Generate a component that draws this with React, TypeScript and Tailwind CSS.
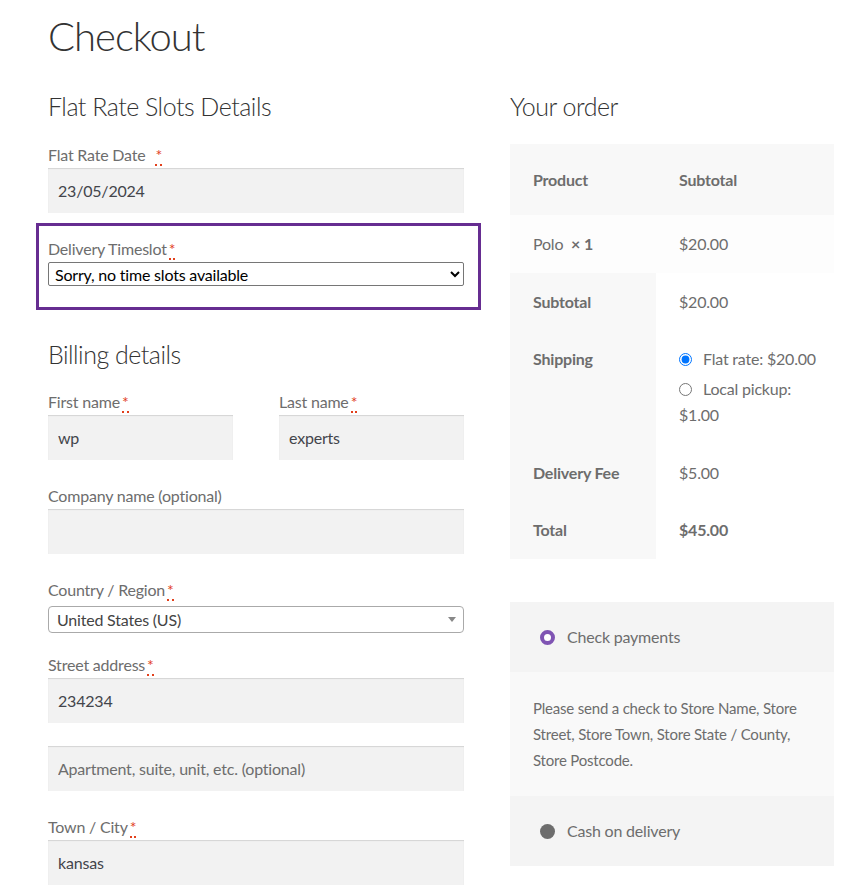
import React from 'react';

const font = { fontFamily: 'Lato, "Open Sans", sans-serif' };

function Req({ gap = false }: { gap?: boolean }) {
    return (
        <abbr
            title="required"
            className={`${gap ? 'ml-[6px]' : 'ml-[2px]'} text-[#e2401c] no-underline border-b-2 border-dotted border-[#e2401c] leading-none`}
        >
            *
        </abbr>
    );
}

function Label({ children }: { children: React.ReactNode }) {
    return <label className="block text-[16px] leading-[26px] text-[#6d6d6d]">{children}</label>;
}

function TextInput({ value, placeholder }: { value?: string; placeholder?: string }) {
    return (
        <input
            defaultValue={value}
            placeholder={placeholder}
            className="block w-full h-[45px] px-[10px] bg-[#f2f2f2] text-[16px] tracking-[-0.2px] text-[#43454b] placeholder:text-[#6d6d6d] shadow-[inset_0_1px_1px_rgba(0,0,0,0.125)] outline-none"
        />
    );
}

function Field({ label, children, last }: { label?: React.ReactNode; children: React.ReactNode; last?: boolean }) {
    return (
        <div className={last ? '' : 'mb-[23px]'}>
            {label && <Label>{label}</Label>}
            {children}
        </div>
    );
}

export default function App() {
    return (
        <div className="min-h-[893px] bg-white px-[48px] overflow-hidden tracking-[-0.2px]" style={font}>
            <h1 className="mt-[11px] text-[40px] leading-[51px] font-light tracking-[-1px] text-[#333333]">Checkout</h1>

            <div className="mt-[27px] flex gap-[46px]">
                {/* Left column: slots + billing */}
                <div className="w-[416px] shrink-0">
                    <h3 className="text-[25px] leading-[34px] font-light tracking-[-0.5px] text-[#333333]">Flat Rate Slots Details</h3>

                    <div className="mt-[19px]">
                        <Label>
                            Flat Rate Date <Req gap />
                        </Label>
                        <TextInput value="23/05/2024" />
                    </div>

                    <div className="mt-[10px] -ml-[12px] w-[445px] border-[3px] border-[#662d91] pl-[9px] pr-[14px] pt-[10px] pb-[21px]">
                        <Label>
                            Delivery Timeslot<Req />
                        </Label>
                        <select className="block w-full h-[24px] pl-[2px] bg-white text-black text-[16px] border border-[#767676] rounded-[2px]">
                            <option>Sorry, no time slots available</option>
                        </select>
                    </div>

                    <h3 className="mt-[27px] text-[25px] leading-[34px] font-light tracking-[-0.5px] text-[#333333]">Billing details</h3>

                    <div className="mt-[18px] flex justify-between">
                        <div className="w-[185px]">
                            <Label>
                                First name<Req />
                            </Label>
                            <TextInput value="wp" />
                        </div>
                        <div className="w-[185px]">
                            <Label>
                                Last name<Req />
                            </Label>
                            <TextInput value="experts" />
                        </div>
                    </div>

                    <div className="mt-[23px]">
                        <Field label="Company name (optional)">
                            <TextInput />
                        </Field>

                        <div className="mb-[19px]">
                            <Label>
                                Country / Region<Req />
                            </Label>
                            <div className="mt-[3px] h-[27px] flex items-center justify-between pl-[8px] pr-[7px] bg-white border border-[#aaaaaa] rounded-[4px]">
                                <span className="text-[16px] text-[#444444]">United States (US)</span>
                                <span className="w-0 h-0 border-x-[4px] border-x-transparent border-t-[5px] border-t-[#888888]" />
                            </div>
                        </div>

                        <Field
                            label={
                                <>
                                    Street address<Req />
                                </>
                            }
                        >
                            <TextInput value="234234" />
                        </Field>
                        <Field>
                            <TextInput placeholder="Apartment, suite, unit, etc. (optional)" />
                        </Field>
                        <Field
                            last
                            label={
                                <>
                                    Town / City<Req />
                                </>
                            }
                        >
                            <TextInput value="kansas" />
                        </Field>
                    </div>
                </div>

                {/* Right column: order review */}
                <div className="w-[324px] shrink-0">
                    <h3 className="text-[25px] leading-[34px] font-light tracking-[-0.5px] text-[#333333]">Your order</h3>

                    <table className="mt-[21px] w-full border-collapse text-[16px] leading-[26px] text-[#6d6d6d] table-fixed">
                        <colgroup>
                            <col className="w-[146px]" />
                            <col className="w-[178px]" />
                        </colgroup>
                        <thead>
                            <tr className="bg-[#f8f8f8]">
                                <th className="h-[71px] px-[23px] text-left font-bold">Product</th>
                                <th className="h-[71px] px-[23px] text-left font-bold">Subtotal</th>
                            </tr>
                        </thead>
                        <tbody>
                            <tr className="bg-[#fdfdfd]">
                                <td className="h-[58px] px-[23px]">
                                    Polo&nbsp; <strong className="font-bold">×&nbsp;1</strong>
                                </td>
                                <td className="h-[58px] px-[23px]">$20.00</td>
                            </tr>
                        </tbody>
                        <tfoot>
                            <tr>
                                <th className="h-[57px] px-[23px] text-left font-bold bg-[#f8f8f8]">Subtotal</th>
                                <td className="h-[57px] px-[23px] bg-white">$20.00</td>
                            </tr>
                            <tr>
                                <th className="px-[23px] pt-[16px] align-top text-left font-bold bg-[#f8f8f8]">Shipping</th>
                                <td className="pl-[23px] pr-0 pt-[16px] pb-[16px] align-top bg-white">
                                    <ul>
                                        <li className="mb-[4px] whitespace-nowrap">
                                            <input
                                                type="radio"
                                                name="ship"
                                                defaultChecked
                                                className="m-0 mr-[11px] w-[13px] h-[13px] align-[-1px]"
                                            />
                                            Flat rate: $20.00
                                        </li>
                                        <li className="pr-[23px]">
                                            <input
                                                type="radio"
                                                name="ship"
                                                className="m-0 mr-[11px] w-[13px] h-[13px] align-[-1px]"
                                            />
                                            Local pickup: $1.00
                                        </li>
                                    </ul>
                                </td>
                            </tr>
                            <tr>
                                <th className="h-[57px] px-[23px] text-left font-bold bg-[#f8f8f8]">Delivery Fee</th>
                                <td className="h-[57px] px-[23px] bg-white">$5.00</td>
                            </tr>
                            <tr>
                                <th className="h-[58px] px-[23px] text-left font-bold bg-[#f8f8f8]">Total</th>
                                <td className="h-[58px] px-[23px] bg-white font-bold">$45.00</td>
                            </tr>
                        </tfoot>
                    </table>

                    <div className="mt-[43px] text-[16px] leading-[26px] text-[#6d6d6d]">
                        <div className="h-[70px] flex items-center gap-[12px] pl-[30px] bg-[#f4f4f4]">
                            <span className="w-[15px] h-[15px] rounded-full border-[4px] border-[#7f54b3] bg-white" />
                            <span>Check payments</span>
                        </div>
                        <div className="px-[23px] py-[23px] bg-[#f9f9f9] text-[15px]">
                            Please send a check to Store Name, Store Street, Store Town, Store State / County, Store Postcode.
                        </div>
                        <div className="h-[70px] flex items-center gap-[12px] pl-[30px] bg-[#f4f4f4]">
                            <span className="w-[15px] h-[15px] rounded-full bg-[#6d6d6d]" />
                            <span>Cash on delivery</span>
                        </div>
                    </div>
                </div>
            </div>
        </div>
    );
}
